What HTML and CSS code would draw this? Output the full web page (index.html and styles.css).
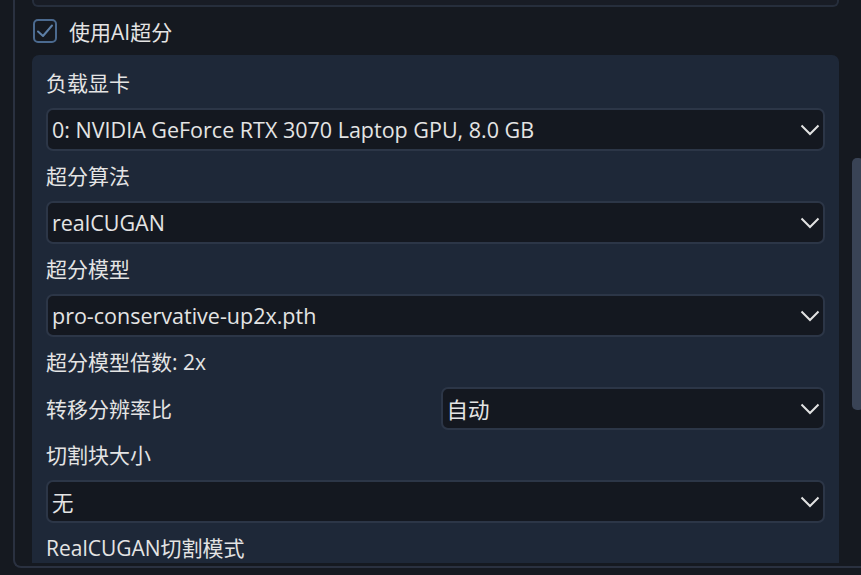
FILE: index.html
```html
<!DOCTYPE html>
<html lang="zh-CN">
<head>
<meta charset="utf-8">
<link rel="stylesheet" href="styles.css">
</head>
<body>
<div class="frame">
  <div class="viewport">
    <div class="content">
      <div class="prev-panel"></div>
      <label class="check-row">
        <span class="checkbox">
          <svg width="18" height="16" viewBox="0 0 18 16"><path d="M2 8.5 L7 13 L16 2.5" fill="none" stroke="#5d7fa6" stroke-width="2" stroke-linecap="round" stroke-linejoin="round"/></svg>
        </span>
        <span class="check-label">使用AI超分</span>
      </label>
      <div class="group">
        <div class="label">负载显卡</div>
        <div class="select"><span>0: NVIDIA GeForce RTX 3070 Laptop GPU, 8.0 GB</span><svg class="chev" width="20" height="12" viewBox="0 0 20 12"><path d="M1.5 1.5 L10 10 L18.5 1.5" fill="none" stroke="#e2e2e2" stroke-width="2"/></svg></div>
        <div class="label">超分算法</div>
        <div class="select"><span>realCUGAN</span><svg class="chev" width="20" height="12" viewBox="0 0 20 12"><path d="M1.5 1.5 L10 10 L18.5 1.5" fill="none" stroke="#e2e2e2" stroke-width="2"/></svg></div>
        <div class="label">超分模型</div>
        <div class="select"><span>pro-conservative-up2x.pth</span><svg class="chev" width="20" height="12" viewBox="0 0 20 12"><path d="M1.5 1.5 L10 10 L18.5 1.5" fill="none" stroke="#e2e2e2" stroke-width="2"/></svg></div>
        <div class="label">超分模型倍数: 2x</div>
        <div class="pair">
          <div class="label">转移分辨率比</div>
          <div class="select"><span>自动</span><svg class="chev" width="20" height="12" viewBox="0 0 20 12"><path d="M1.5 1.5 L10 10 L18.5 1.5" fill="none" stroke="#e2e2e2" stroke-width="2"/></svg></div>
        </div>
        <div class="label">切割块大小</div>
        <div class="select"><span>无</span><svg class="chev" width="20" height="12" viewBox="0 0 20 12"><path d="M1.5 1.5 L10 10 L18.5 1.5" fill="none" stroke="#e2e2e2" stroke-width="2"/></svg></div>
        <div class="label">RealCUGAN切割模式</div>
      </div>
    </div>
    <div class="scrolltrack"><div class="thumb"></div></div>
  </div>
</div>
</body>
</html>
```
FILE: styles.css
```css
* { box-sizing: border-box; }
html, body {
  margin: 0;
  padding: 0;
  background: #151920;
  width: 861px;
  height: 575px;
  overflow: hidden;
  font-family: "Open Sans", "Noto Sans CJK SC", sans-serif;
  color: #e4e4e4;
}
.frame {
  margin-left: 13px;
  width: 860px;
  height: 568px;
  border-left: 2px solid #2a3140;
  border-bottom: 2px solid #2a3140;
  border-bottom-left-radius: 8px;
}
.viewport {
  display: flex;
  height: 563px;
  overflow: hidden;
}
.content {
  width: 824px;
  padding-left: 17px;
  flex: none;
}
.prev-panel {
  height: 7px;
  background: #181c25;
  border: 2px solid #262e3c;
  border-top: none;
  border-radius: 0 0 6px 6px;
}
.check-row {
  display: flex;
  align-items: center;
  gap: 12px;
  margin-top: 12px;
  height: 24px;
  padding-left: 1px;
}
.checkbox {
  width: 24px;
  height: 24px;
  border: 2px solid #4b6a8f;
  border-radius: 5px;
  display: flex;
  align-items: center;
  justify-content: center;
}
.check-label {
  font-size: 21px;
}
.group {
  margin-top: 12px;
  background: #1e2838;
  border-radius: 7px;
  padding: 10px 14px 20px;
  display: flex;
  flex-direction: column;
  gap: 7px;
}
.label {
  font-size: 21px;
  height: 36px;
  line-height: 36px;
  white-space: nowrap;
}
.select {
  height: 43px;
  background: #141820;
  border: 2px solid #2c3647;
  border-radius: 7px;
  display: flex;
  align-items: center;
  justify-content: space-between;
  padding: 0 3px 0 4px;
  font-size: 21.5px;
  white-space: nowrap;
}
.chev { flex: none; }
.pair {
  display: grid;
  grid-template-columns: 1fr 1fr;
  gap: 10px;
  align-items: center;
}
.scrolltrack {
  flex: none;
  margin-left: 13px;
  padding-top: 158px;
}
.thumb {
  width: 12px;
  height: 252px;
  background: #394355;
  border-radius: 5px;
}
```
